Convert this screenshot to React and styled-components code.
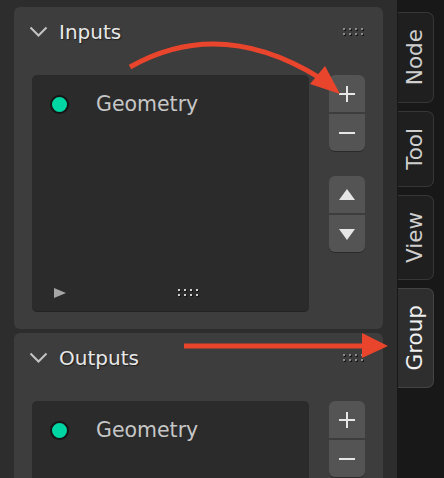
import styled, { createGlobalStyle } from 'styled-components';

const GlobalStyle = createGlobalStyle`
  html, body {
    margin: 0;
    padding: 0;
    background: #2d2d2d;
    font-family: 'DejaVu Sans', 'Liberation Sans', sans-serif;
    overflow: hidden;
  }
`;

const Page = styled.div`
  position: relative;
  width: 444px;
  height: 478px;
  display: flex;
  overflow: hidden;
`;

const Main = styled.div`
  width: 397px;
  display: flex;
  flex-direction: column;
  gap: 4px;
  padding: 7px 14px 0 14px;
  box-sizing: border-box;
  border-top: 5px solid #232323;
  margin-top: -5px;
`;

const Panel = styled.div`
  background: #3d3d3d;
  border-radius: 6px;
  padding: 0 18px 18px 18px;
  flex-shrink: 0;
`;

const Header = styled.div`
  height: 50px;
  display: flex;
  align-items: center;
  gap: 11px;
  margin-left: -3px;
`;

const Title = styled.span`
  font-size: 20px;
  color: #e8e8e8;
  text-shadow: 1px 1px 1px #1e1e1e;
  flex: 1;
`;

const Body = styled.div`
  margin-top: 18px;
  display: flex;
  gap: 20px;
`;

const List = styled.div`
  width: 277px;
  height: ${({ h }) => h}px;
  background: #2b2b2b;
  border-radius: 5px;
  box-shadow: 0 1px 0 #232323;
  position: relative;
  display: flex;
  flex-direction: column;
  justify-content: space-between;
  box-sizing: border-box;
  padding: 17px 0 13px 18px;
`;

const Item = styled.div`
  display: flex;
  align-items: center;
  gap: 27px;
`;

const Socket = styled.span`
  width: 15px;
  height: 15px;
  border-radius: 50%;
  background: #00d6a3;
  border: 2px solid #151515;
  flex-shrink: 0;
`;

const ItemLabel = styled.span`
  font-size: 20.5px;
  color: #c6c6c6;
`;

const ListFooter = styled.div`
  display: flex;
  align-items: center;
  padding-left: 4px;
  gap: 112px;
`;

const Play = styled.span`
  width: 0;
  height: 0;
  border-top: 5px solid transparent;
  border-bottom: 5px solid transparent;
  border-left: 12px solid #a6a6a6;
`;

const Side = styled.div`
  display: flex;
  flex-direction: column;
  gap: 25px;
`;

const BtnGroup = styled.div`
  width: 36px;
  display: flex;
  flex-direction: column;
  gap: 2px;
  box-shadow: 0 1px 0 #2a2a2a;
  border-radius: 6px;
`;

const Btn = styled.div`
  height: 37px;
  background: #545454;
  display: flex;
  align-items: center;
  justify-content: center;
  border-radius: ${({ first }) => (first ? '6px 6px 0 0' : '0 0 6px 6px')};
`;

const Sidebar = styled.div`
  width: 47px;
  background: #181818;
  display: flex;
  flex-direction: column;
  padding-top: 12px;
  gap: 8px;
  box-sizing: border-box;
`;

const Tab = styled.div`
  width: 36px;
  height: ${({ h }) => h}px;
  margin-left: 1px;
  box-sizing: border-box;
  background: ${({ active }) => (active ? '#2e2e2e' : '#1f1f1f')};
  border: 1px solid ${({ active }) => (active ? '#444' : '#363636')};
  border-left: none;
  border-radius: 0 7px 7px 0;
  display: flex;
  align-items: center;
  justify-content: center;
`;

const TabLabel = styled.span`
  writing-mode: vertical-rl;
  transform: rotate(180deg);
  font-size: 21.5px;
  color: ${({ active }) => (active ? '#f0f0f0' : '#cfcfcf')};
  margin-left: -2px;
`;

const Overlay = styled.svg`
  position: absolute;
  left: 0;
  top: 0;
  pointer-events: none;
`;

const Chevron = () => (
  <svg width="19" height="12" viewBox="0 0 19 12">
    <path d="M1.5 1.5 L9.5 9.5 L17.5 1.5" fill="none" stroke="#c4c4c4" strokeWidth="2" />
  </svg>
);

const Grip = ({ light }) => (
  <svg width="22" height="9" viewBox="0 0 22 9">
    {[0, 1, 2, 3].map((c) =>
      [0, 1].map((r) => (
        <g key={`${c}-${r}`}>
          <rect x={c * 6 + 1} y={r * 5 + 1} width="2" height="2" fill="#151515" />
          <rect x={c * 6} y={r * 5} width="2" height="2" fill={light ? '#cfcfcf' : '#8a8a8a'} />
        </g>
      ))
    )}
  </svg>
);

const Plus = () => (
  <svg width="18" height="18" viewBox="0 0 18 18">
    <path d="M9 1 V17 M1 9 H17" stroke="#e6e6e6" strokeWidth="2" />
  </svg>
);

const Minus = () => (
  <svg width="18" height="18" viewBox="0 0 18 18">
    <path d="M1 9 H17" stroke="#e6e6e6" strokeWidth="2" />
  </svg>
);

const Tri = ({ down }) => (
  <svg width="16" height="14" viewBox="0 0 16 14">
    <path d={down ? 'M0 2 L16 2 L8 13 Z' : 'M0 12 L16 12 L8 1 Z'} fill="#e6e6e6" />
  </svg>
);

const SocketPanel = ({ title, listHeight, arrows }) => (
  <Panel>
    <Header>
      <Chevron />
      <Title>{title}</Title>
      <Grip />
    </Header>
    <Body>
      <List h={listHeight}>
        <Item>
          <Socket />
          <ItemLabel>Geometry</ItemLabel>
        </Item>
        <ListFooter>
          <Play />
          <Grip light />
        </ListFooter>
      </List>
      <Side>
        <BtnGroup>
          <Btn first>
            <Plus />
          </Btn>
          <Btn>
            <Minus />
          </Btn>
        </BtnGroup>
        {arrows && (
          <BtnGroup>
            <Btn first>
              <Tri />
            </Btn>
            <Btn>
              <Tri down />
            </Btn>
          </BtnGroup>
        )}
      </Side>
    </Body>
  </Panel>
);

const tabs = [
  { name: 'Node', h: 91 },
  { name: 'Tool', h: 76 },
  { name: 'View', h: 85 },
  { name: 'Group', h: 100, active: true },
];

export default function App() {
  return (
    <>
      <GlobalStyle />
      <Page>
        <Main>
          <SocketPanel title="Inputs" listHeight={236} arrows />
          <SocketPanel title="Outputs" listHeight={236} />
        </Main>
        <Sidebar>
          {tabs.map((t) => (
            <Tab key={t.name} h={t.h} active={t.active}>
              <TabLabel active={t.active}>{t.name}</TabLabel>
            </Tab>
          ))}
        </Sidebar>
        <Overlay width="444" height="478" viewBox="0 0 444 478">
          <path d="M130 67 Q220 16 320 78" fill="none" stroke="#e8452c" strokeWidth="5" />
          <polygon points="310,84 325,66 340,94" fill="#e8452c" />
          <path d="M184 346 H366" stroke="#e8452c" strokeWidth="5" />
          <polygon points="362,333 388,346 362,358" fill="#e8452c" />
        </Overlay>
      </Page>
    </>
  );
}
